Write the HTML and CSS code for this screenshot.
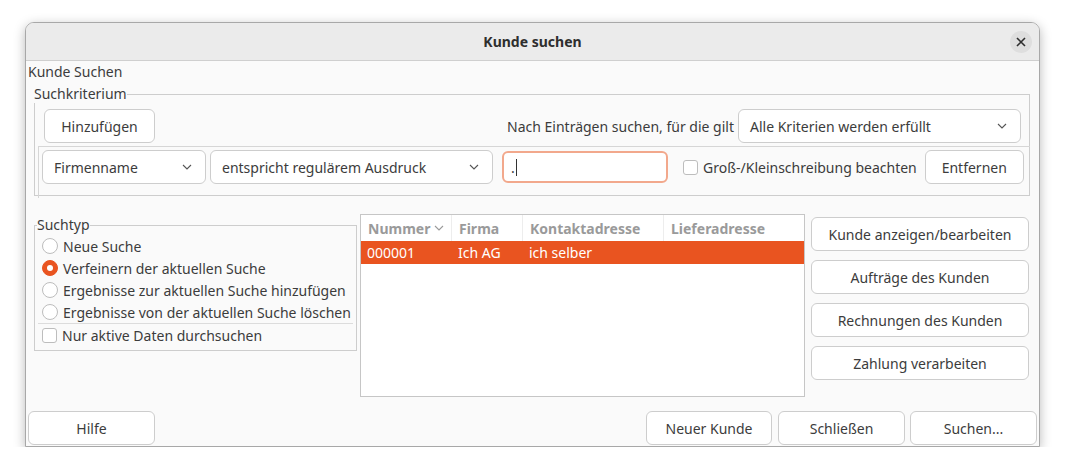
FILE: index.html
```html
<!DOCTYPE html>
<html lang="de">
<head>
<meta charset="utf-8">
<title>Kunde suchen</title>
<link rel="stylesheet" href="styles.css">
</head>
<body>
<div class="dialog">
  <div class="titlebar">
    <span class="title">Kunde suchen</span>
    <span class="close" aria-label="Schließen">
      <svg width="10" height="10" viewBox="0 0 10 10"><path d="M1 1 L9 9 M9 1 L1 9" stroke="#2e2e2e" stroke-width="1.6" fill="none"/></svg>
    </span>
  </div>
  <div class="content">
    <div class="caption">Kunde Suchen</div>
    <fieldset class="frame criteria">
      <legend>Suchkriterium</legend>
      <div class="crit-top">
        <button class="btn btn-add">Hinzufügen</button>
        <div class="match">
          <span class="match-label">Nach Einträgen suchen, für die gilt</span>
          <div class="combo combo-match"><span>Alle Kriterien werden erfüllt</span><svg class="chev" width="10" height="6" viewBox="0 0 10 6"><path d="M1 1 L5 5 L9 1" stroke="#555" stroke-width="1.1" fill="none"/></svg></div>
        </div>
      </div>
      <div class="crit-row">
        <div class="combo combo-field"><span>Firmenname</span><svg class="chev" width="10" height="6" viewBox="0 0 10 6"><path d="M1 1 L5 5 L9 1" stroke="#555" stroke-width="1.1" fill="none"/></svg></div>
        <div class="combo combo-op"><span>entspricht regulärem Ausdruck</span><svg class="chev" width="10" height="6" viewBox="0 0 10 6"><path d="M1 1 L5 5 L9 1" stroke="#555" stroke-width="1.1" fill="none"/></svg></div>
        <div class="entry"><span>.</span><span class="cursor"></span></div>
        <label class="check case"><span class="box"></span>Groß-/Kleinschreibung beachten</label>
        <button class="btn btn-remove">Entfernen</button>
      </div>
    </fieldset>

    <div class="middle">
      <fieldset class="frame suchtyp">
        <legend>Suchtyp</legend>
        <div class="radio"><span class="dot"></span>Neue Suche</div>
        <div class="radio"><span class="dot on"></span>Verfeinern der aktuellen Suche</div>
        <div class="radio"><span class="dot"></span>Ergebnisse zur aktuellen Suche hinzufügen</div>
        <div class="radio"><span class="dot"></span>Ergebnisse von der aktuellen Suche löschen</div>
        <div class="sep"></div>
        <div class="check active"><span class="box"></span>Nur aktive Daten durchsuchen</div>
      </fieldset>

      <div class="tree">
        <div class="thead">
          <div class="th c1">Nummer<svg class="sort" width="10" height="6" viewBox="0 0 10 6"><path d="M1 1 L5 5 L9 1" stroke="#9a9a9a" stroke-width="1.1" fill="none"/></svg></div>
          <div class="th c2">Firma</div>
          <div class="th c3">Kontaktadresse</div>
          <div class="th c4">Lieferadresse</div>
        </div>
        <div class="trow sel">
          <div class="td c1">000001</div>
          <div class="td c2">Ich AG</div>
          <div class="td c3">ich selber</div>
          <div class="td c4"></div>
        </div>
      </div>

      <div class="actions">
        <button class="btn">Kunde anzeigen/bearbeiten</button>
        <button class="btn">Aufträge des Kunden</button>
        <button class="btn">Rechnungen des Kunden</button>
        <button class="btn">Zahlung verarbeiten</button>
      </div>
    </div>

    <div class="bottom">
      <button class="btn btn-foot">Hilfe</button>
      <div class="spacer"></div>
      <button class="btn btn-foot btn-new">Neuer Kunde</button>
      <button class="btn btn-foot">Schließen</button>
      <button class="btn btn-foot">Suchen...</button>
    </div>
  </div>
</div>
</body>
</html>
```

FILE: styles.css
```css
* { box-sizing: border-box; }
html, body { margin: 0; padding: 0; background: #ffffff; }
body {
  font-family: "Noto Sans", "Open Sans", sans-serif;
  font-size: 14px;
  color: #3c3c3c;
  padding: 22px 0 0 25px;
}
.dialog {
  width: 1015px;
  height: 425px;
  background: #fafafa;
  border: 1px solid #a8a8a8;
  border-radius: 9px 9px 0 0;
  box-shadow: 0 3px 12px rgba(0,0,0,0.28);
  display: flex;
  flex-direction: column;
}
.titlebar {
  height: 38px;
  background: #ebebeb;
  border-bottom: 1px solid #cfcfcf;
  border-radius: 8px 8px 0 0;
  display: flex;
  align-items: center;
  justify-content: center;
  position: relative;
}
.title { font-weight: bold; font-size: 14px; color: #2e2e2e; }
.close {
  position: absolute;
  right: 7px;
  top: 8px;
  width: 22px;
  height: 22px;
  border-radius: 50%;
  background: #dedede;
  display: flex;
  align-items: center;
  justify-content: center;
}
.content {
  flex: 1;
  padding: 1px 2px 1px 2px;
  display: flex;
  flex-direction: column;
}
.caption { height: 20px; line-height: 20px; }
.frame {
  margin: 0;
  padding: 0;
  border: 1px solid #cdcdcd;
  min-width: 0;
}
.frame legend {
  padding: 0;
  margin-left: -1px;
  line-height: 18px;
}
.criteria {
  margin: 3px 7px 0 6px;
  height: 111px;
}
.crit-top {
  display: flex;
  align-items: center;
  justify-content: space-between;
  padding: 6px 8px 3px 9px;
}
.match { display: flex; align-items: center; gap: 4px; }
.btn {
  font-family: inherit;
  font-size: 14px;
  color: #3c3c3c;
  background: #ffffff;
  border: 1px solid #cdcdcd;
  border-radius: 6px;
  height: 34px;
  padding: 0 12px;
}
.btn-add { width: 111px; }
.combo {
  height: 34px;
  background: #ffffff;
  border: 1px solid #cdcdcd;
  border-radius: 6px;
  display: flex;
  align-items: center;
  justify-content: space-between;
  padding: 0 13px 0 11px;
}
.combo-match { width: 283px; }
.crit-row {
  margin: 0 -1px 0 3px;
  border-top: 1px solid #d6d6d6;
  border-left: 1px solid #d6d6d6;
  height: 52px;
  display: flex;
  align-items: flex-start;
  padding: 3px 6px 0 3px;
}
.combo-field { width: 164px; }
.combo-op { width: 283px; margin-left: 4px; }
.entry {
  margin-left: 9px;
  margin-top: 1px;
  width: 166px;
  height: 32px;
  background: #ffffff;
  border: 2px solid #f2a88c;
  border-radius: 6px;
  display: flex;
  align-items: center;
  padding-left: 7px;
}
.cursor { display: inline-block; width: 1px; height: 17px; background: #333; margin-left: 1px; }
.check { display: flex; align-items: center; }
.crit-row .check { height: 34px; }
.box {
  width: 15px;
  height: 15px;
  background: #ffffff;
  border: 1px solid #bdbdbd;
  border-radius: 3px;
  margin-right: 5px;
  flex: none;
}
.case { margin-left: 15px; }
.btn-remove { margin-left: 8px; width: 99px; }

.middle {
  display: flex;
  margin: 18px 0 0 6px;
  align-items: flex-start;
}
.suchtyp {
  width: 323px;
  height: 135px;
  padding: 1px 3px 0 3px;
  margin-top: 2px;
}
.radio { display: flex; align-items: center; height: 22px; padding-left: 4px; }
.dot {
  width: 16px;
  height: 16px;
  border-radius: 50%;
  border: 1px solid #bdbdbd;
  background: #ffffff;
  margin-right: 5px;
  flex: none;
  display: flex;
  align-items: center;
  justify-content: center;
}
.dot.on { background: #e95420; border-color: #e95420; }
.dot.on::after { content: ""; width: 6px; height: 6px; border-radius: 50%; background: #ffffff; }
.sep { border-top: 1px solid #dcdcdc; margin: 0; }
.active { height: 22px; padding-left: 4px; }

.tree {
  width: 445px;
  height: 183px;
  margin-left: 3px;
  background: #ffffff;
  border: 1px solid #c6c6c6;
}
.thead { display: flex; height: 26px; align-items: center; }
.th {
  color: #9a9a9a;
  font-weight: bold;
  height: 26px;
  padding-left: 7px;
  border-right: 1px solid #ededed;
  display: flex;
  align-items: center;
}
.th.c4 { border-right: none; }
.sort { margin-left: 4px; }
.c1 { width: 91px; }
.c2 { width: 71px; }
.c3 { width: 141px; }
.c4 { flex: 1; }
.trow { display: flex; height: 23px; align-items: center; }
.trow.sel { background: #e95420; color: #ffffff; }
.td { padding-left: 6px; }

.actions {
  width: 218px;
  margin-left: 6px;
  margin-top: 3px;
  display: flex;
  flex-direction: column;
  gap: 9px;
}
.actions .btn { width: 218px; }

.bottom {
  margin-top: auto;
  display: flex;
  gap: 5px;
}
.spacer { flex: 1; }
.btn-foot { width: 127px; }
.btn-new { width: 126px; margin-right: 1px; }
```
